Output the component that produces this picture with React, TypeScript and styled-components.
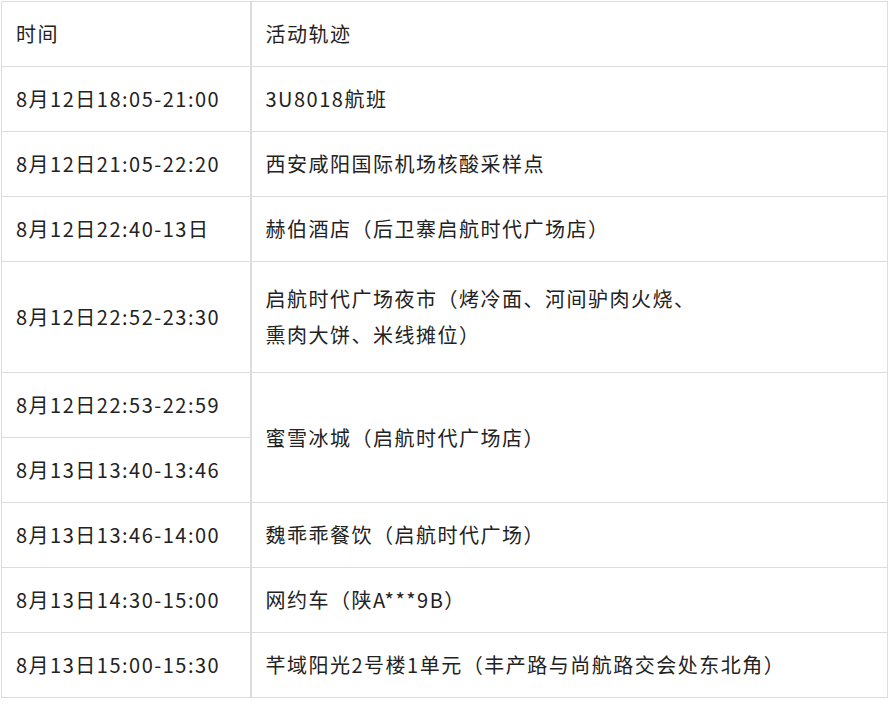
import styled, { createGlobalStyle } from "styled-components";

interface Entry {
  time: string;
  place?: string[];
  span?: number;
  tall?: boolean;
}

const entries: Entry[] = [
  { time: "8月12日18:05-21:00", place: ["3U8018航班"] },
  { time: "8月12日21:05-22:20", place: ["西安咸阳国际机场核酸采样点"] },
  { time: "8月12日22:40-13日", place: ["赫伯酒店（后卫寨启航时代广场店）"] },
  {
    time: "8月12日22:52-23:30",
    place: ["启航时代广场夜市（烤冷面、河间驴肉火烧、", "熏肉大饼、米线摊位）"],
    tall: true,
  },
  { time: "8月12日22:53-22:59", place: ["蜜雪冰城（启航时代广场店）"], span: 2 },
  { time: "8月13日13:40-13:46" },
  { time: "8月13日13:46-14:00", place: ["魏乖乖餐饮（启航时代广场）"] },
  { time: "8月13日14:30-15:00", place: ["网约车（陕A***9B）"] },
  { time: "8月13日15:00-15:30", place: ["芊域阳光2号楼1单元（丰产路与尚航路交会处东北角）"] },
];

const GlobalStyle = createGlobalStyle`
  body {
    margin: 0;
    background: #fff;
  }
`;

const Page = styled.div`
  padding: 1px;
`;

const Table = styled.table`
  width: 887px;
  border-collapse: collapse;
  table-layout: fixed;
  font-family: "Noto Sans CJK SC", "Noto Sans", sans-serif;
  font-size: 20px;
  letter-spacing: 1.5px;
  color: #222;
`;

const Row = styled.tr<{ tall?: boolean }>`
  height: ${(p) => (p.tall ? "111px" : "65px")};
`;

const Cell = styled.td<{ first?: boolean }>`
  border: 1px solid #dcdcdc;
  border-right-width: ${(p) => (p.first ? "2px" : "1px")};
  padding: 0 14px;
  line-height: 36px;
  vertical-align: middle;
  white-space: nowrap;
`;

export default function App() {
  return (
    <Page>
      <GlobalStyle />
      <Table>
        <colgroup>
          <col style={{ width: 249 }} />
          <col />
        </colgroup>
        <tbody>
          <Row>
            <Cell first>时间</Cell>
            <Cell>活动轨迹</Cell>
          </Row>
          {entries.map((e) => (
            <Row key={e.time} tall={e.tall}>
              <Cell first>{e.time}</Cell>
              {e.place && (
                <Cell rowSpan={e.span}>
                  {e.place.map((line, i) => (
                    <div key={i}>{line}</div>
                  ))}
                </Cell>
              )}
            </Row>
          ))}
        </tbody>
      </Table>
    </Page>
  );
}
